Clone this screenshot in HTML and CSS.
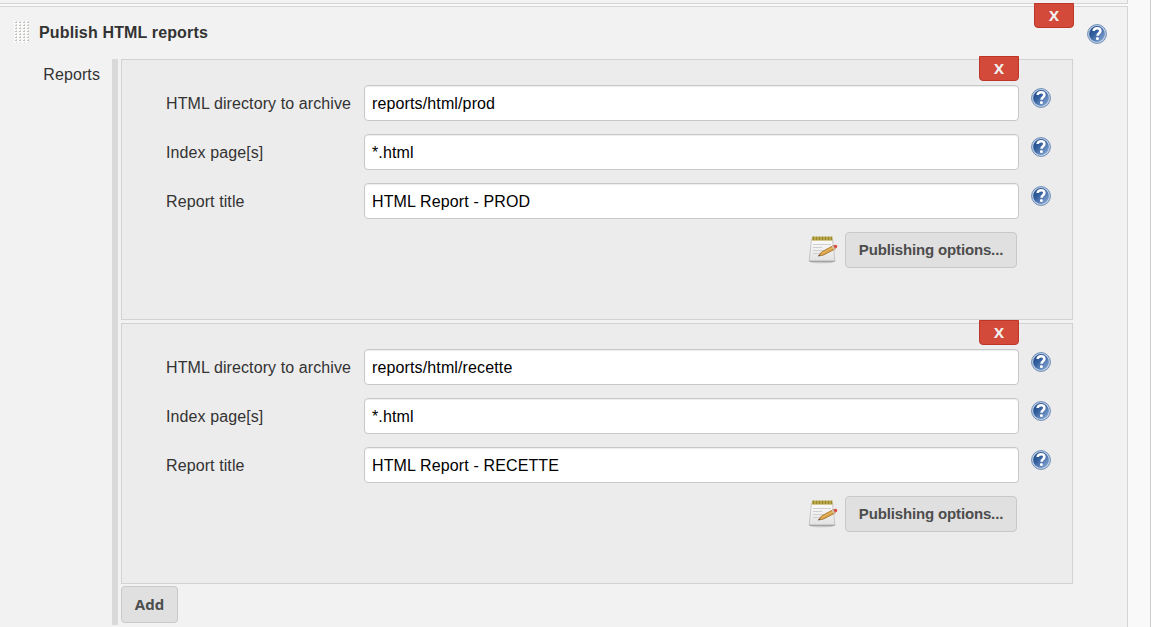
FILE: index.html
```html
<!DOCTYPE html>
<html lang="en">
<head>
<meta charset="utf-8">
<title>Publish HTML reports</title>
<link rel="stylesheet" href="styles.css">
</head>
<body>
<svg class="defs" width="0" height="0" aria-hidden="true">
  <defs>
    <linearGradient id="blue" x1="0" y1="0" x2="1" y2="1"><stop offset="0" stop-color="#1d4583"/><stop offset=".4" stop-color="#345f9e"/><stop offset="1" stop-color="#93b2dc"/></linearGradient>
    <linearGradient id="paper" x1="0" y1="0" x2="0" y2="1"><stop offset="0" stop-color="#fcfcfc"/><stop offset="1" stop-color="#e2e2e2"/></linearGradient>
    <pattern id="dots" width="4" height="3" patternUnits="userSpaceOnUse"><rect width="4" height="3" fill="#fafafa"/><rect x="1" y="1" width="2" height="1" fill="#c0c0bc"/><rect x="2" y="0" width="1" height="1" fill="#d6d6d1"/></pattern>
    <symbol id="help" viewBox="0 0 20 20">
      <circle cx="10" cy="10" r="9.4" fill="#c4d5e9" stroke="#6a88b2"/>
      <circle cx="10" cy="10" r="7.9" fill="url(#blue)"/>
      <path d="M6.6 7C6.8 5 8.2 4.3 10.1 4.3c2.1 0 3.3 1 3.3 2.6 0 2.3-2.9 2.3-2.9 4.9" fill="none" stroke="#fff" stroke-width="2.5"/>
      <rect x="9" y="13.3" width="2.8" height="2.6" rx=".8" fill="#fff"/>
    </symbol>
    <symbol id="notepad" viewBox="0 0 30 30">
      <ellipse cx="14" cy="27.2" rx="11" ry="1" fill="#c6c6c6"/>
      <path d="M3.5 4h21L27 26.2H1.2z" fill="url(#paper)" stroke="#bcbcbc" stroke-width=".8"/>
      <path d="M1.5 26.3h25.2" stroke="#9c9c9c"/>
      <path d="M5 9.5h18M5 12.5h9M5 15.5h12M5 18.5h7" stroke="#d0d0d0"/>
      <path d="M4 1.6h20.5v4H4z" fill="#b9a745"/>
      <path d="M5.5 1.6v3.4M8.5 1.6v3.4M11.5 1.6v3.4M14.5 1.6v3.4M17.5 1.6v3.4M20.5 1.6v3.4M23.5 1.6v3.4" stroke="#9a8938"/>
      <path d="m10.5 20.9 3-3.9L25 10.7l2 3.4-11.5 6z" fill="#d79e40" stroke="#a57533" stroke-width=".8"/>
      <path d="m14 18.5 11.5-6.2" stroke="#eabf68"/>
      <path d="m24.4 10.8 2 3.6" stroke="#cdc9c0" stroke-width="1.5"/>
      <path d="m25.4 10.4 2-.7q1.8 0 1.9 1.7 0 1.2-2.2 2.4z" fill="#da4a40"/>
      <path d="m9.5 21.5 2.2-2 1 1.2z" fill="#6a5a3c"/>
    </symbol>
  </defs>
</svg>
<div class="page">
  <div class="previous"></div>
  <section class="publisher">
    <button class="delete outer-delete">X</button>
    <header class="heading">
      <svg class="grip" width="15" height="22"><rect width="15" height="22" fill="url(#dots)"/></svg>
      <h1 class="title">Publish HTML reports</h1>
      <svg class="help"><use href="#help"/></svg>
    </header>
    <div class="body">
      <div class="side-label">Reports</div>
      <div class="reports">
        <div class="report">
          <button class="delete">X</button>
          <div class="row"><label class="label">HTML directory to archive</label><div class="field">reports/html/prod</div><svg class="help"><use href="#help"/></svg></div>
          <div class="row"><label class="label">Index page[s]</label><div class="field">*.html</div><svg class="help"><use href="#help"/></svg></div>
          <div class="row"><label class="label">Report title</label><div class="field">HTML Report - PROD</div><svg class="help"><use href="#help"/></svg></div>
          <div class="actions"><svg class="notepad"><use href="#notepad"/></svg><button class="button options">Publishing options...</button></div>
        </div>
        <div class="report">
          <button class="delete">X</button>
          <div class="row"><label class="label">HTML directory to archive</label><div class="field">reports/html/recette</div><svg class="help"><use href="#help"/></svg></div>
          <div class="row"><label class="label">Index page[s]</label><div class="field">*.html</div><svg class="help"><use href="#help"/></svg></div>
          <div class="row"><label class="label">Report title</label><div class="field">HTML Report - RECETTE</div><svg class="help"><use href="#help"/></svg></div>
          <div class="actions"><svg class="notepad"><use href="#notepad"/></svg><button class="button options">Publishing options...</button></div>
        </div>
        <button class="button add">Add</button>
      </div>
    </div>
  </section>
</div>
</body>
</html>
```
FILE: styles.css
```css
* { box-sizing: border-box; }
body { margin: 0; overflow: hidden; background: #fff; color: #333; font: 16px/20px "Liberation Sans", Arial, sans-serif; }
.defs { position: absolute; }
.page { width: 1151px; height: 627px; background: #f9f9f9; border-right: 1px solid #ccc; overflow: hidden; }
.previous { width: 1128px; height: 4px; background: #f2f2f2; border: solid #d5d5d5; border-width: 0 1px 1px 0; }
.publisher { position: relative; width: 1128px; height: 640px; margin-top: 2px; background: #f2f2f2; border: solid #d5d5d5; border-width: 1px 1px 0 0; }
.heading { display: flex; align-items: flex-start; height: 52px; padding: 14px 20px 0 14px; }
.title { flex: 1; margin: 2px 0 0 10px; font-size: 16px; line-height: 20px; letter-spacing: .15px; }
.help { display: block; flex: none; width: 20px; height: 20px; }
.heading .help { margin-top: 3px; }
.body { display: flex; height: 566px; }
.side-label { width: 112px; padding: 6px 12px 0 0; text-align: right; letter-spacing: .1px; }
.reports { width: 961px; border-left: 6px solid #d9d9d9; padding-left: 3px; }
.report { position: relative; height: 261px; margin-bottom: 3px; padding: 25px 20px 0 44px; background: #ececec; border: 1px solid #d2d2d2; }
.report:last-of-type { margin-bottom: 2px; }
.row { display: flex; height: 36px; margin-bottom: 13px; align-items: center; }
.row .help { margin: -10px 0 0 12px; }
.label { width: 198px; padding-top: 2px; letter-spacing: .1px; }
.field { width: 655px; height: 36px; padding: 8px 7px 6px; background: #fff; border: 1px solid #c8c8c8; border-radius: 4px; box-shadow: inset 0 1px 1px #eee; color: #000; letter-spacing: .13px; }
.actions { display: flex; align-items: center; justify-content: flex-end; padding-right: 35px; }
.notepad { width: 30px; height: 30px; margin: -1px 7px 0 0; }
.button { height: 36px; padding: 0; border: 1px solid #c9c9c9; border-radius: 4px; background: #e0e0e0; color: #4d4d4d; font: bold 15px/20px "Liberation Sans", Arial, sans-serif; }
.options { width: 172px; letter-spacing: -.15px; }
.add { display: block; width: 57px; height: 37px; padding-bottom: 2px; font-family: "Open Sans", sans-serif; }
.delete { position: absolute; top: -4px; right: 53px; width: 40px; height: 25px; padding: 0 0 1px; border: 1px solid #bd3728; border-radius: 0 0 4px 4px; background: #d34a3b; color: #f2f2f2; font: bold 15px/20px "Open Sans", sans-serif; }
```
